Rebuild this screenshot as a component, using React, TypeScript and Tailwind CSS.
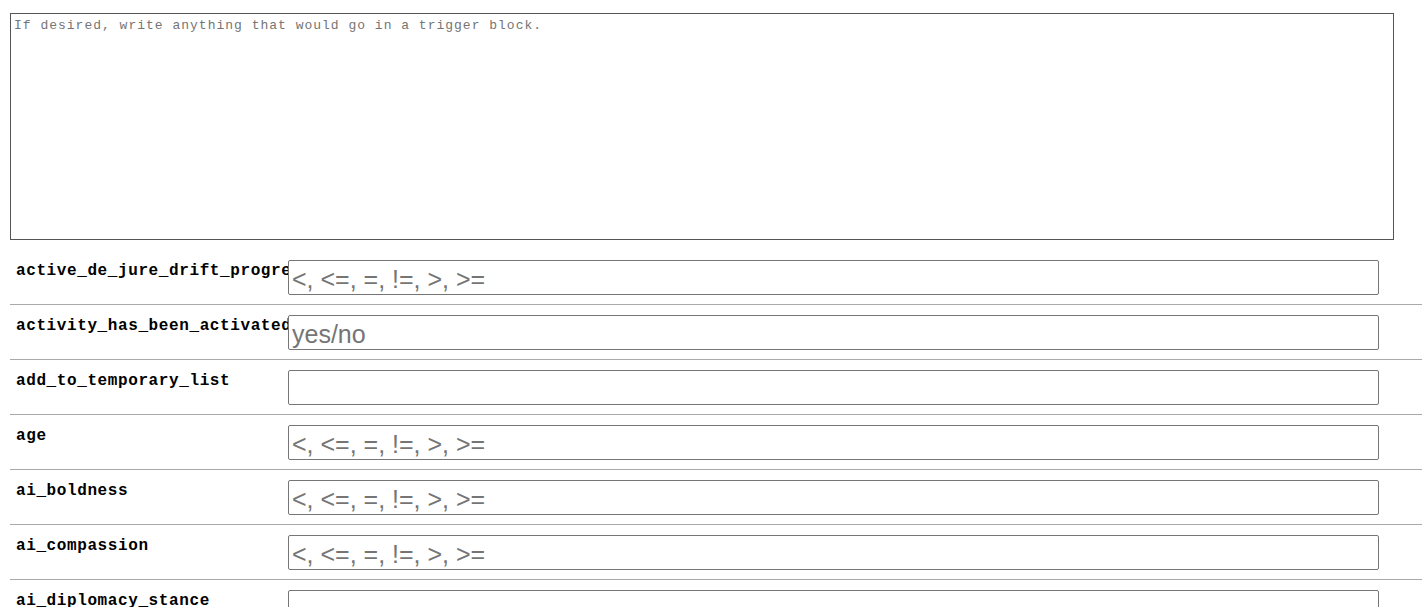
import React from "react"

const CMP = "<, <=, =, !=, >, >="

const rows = [
  { name: "active_de_jure_drift_progress", hint: CMP },
  { name: "activity_has_been_activated", hint: "yes/no" },
  { name: "add_to_temporary_list", hint: "" },
  { name: "age", hint: CMP },
  { name: "ai_boldness", hint: CMP },
  { name: "ai_compassion", hint: CMP },
  { name: "ai_diplomacy_stance", hint: "" },
  { name: "ai_energy", hint: CMP },
]

export default function App() {
  return (
    <div className="bg-white min-h-[607px] h-[607px] overflow-hidden pt-[13px]">
      <textarea
        placeholder="If desired, write anything that would go in a trigger block."
        className="block ml-[10px] w-[1384px] h-[227px] border border-[#555] px-[3px] pt-[3px] text-[13px] tracking-[1px] leading-[17px] text-[#333] placeholder:text-[#757575] resize-none outline-none font-['Liberation_Mono',monospace]"
      />

      <div className="mt-[10px]">
        {rows.map((row, i) => (
          <div key={row.name}>
            {i > 0 && <div className="ml-[10px] h-px bg-[#a9a9a9]" />}
            <div className="flex items-start pt-[10px] pb-[9px]">
              <div className="w-[272px] ml-[16px] pt-[1px] whitespace-nowrap overflow-visible font-bold text-[16px] tracking-[0.6px] leading-[20px] text-black font-['Liberation_Mono',monospace]">
                {row.name}
              </div>
              <input
                placeholder={row.hint}
                className="relative z-10 bg-white w-[1091px] h-[35px] border border-[#767676] rounded-[2px] px-[3px] pt-[4px] text-[25px] text-black placeholder:text-[#757575] outline-none font-['Liberation_Sans',Arial,sans-serif]"
              />
            </div>
          </div>
        ))}
      </div>
    </div>
  )
}
